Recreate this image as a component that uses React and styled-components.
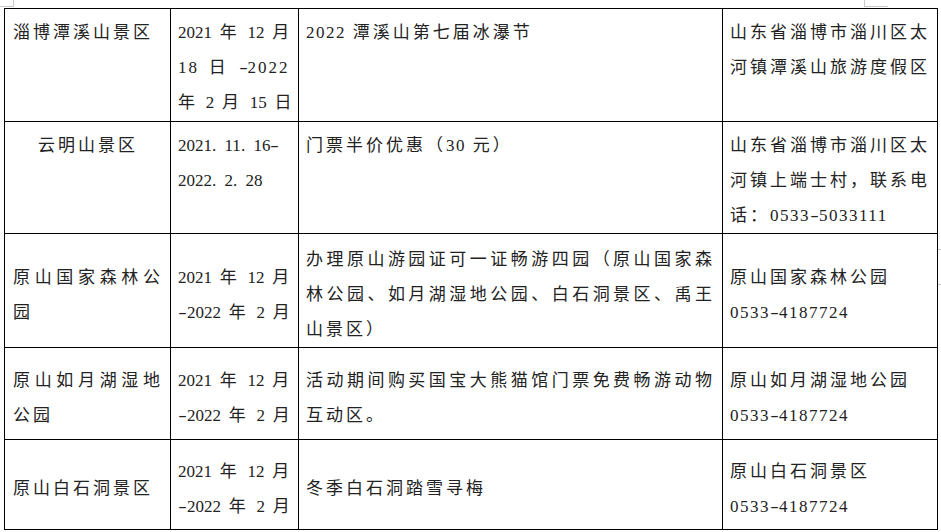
import React from "react";
import styled, { createGlobalStyle } from "styled-components";

const GlobalStyle = createGlobalStyle`
  html, body {
    margin: 0;
    padding: 0;
    background: #fff;
  }
  body {
    width: 941px;
    height: 532px;
    overflow: hidden;
  }
`;

const Page = styled.div`
  position: relative;
  width: 941px;
  height: 532px;
  padding: 8px 0 0 4px;
  box-sizing: border-box;
  font-family: "Liberation Serif", "Noto Sans CJK SC", serif;
  font-size: 17px;
  color: #222;
`;

// Word margin corner marks
const Mark = styled.div`
  position: absolute;
  background: #c9c9c9;
  left: ${p => p.$x}px;
  top: ${p => p.$y}px;
  width: ${p => p.$w}px;
  height: ${p => p.$h}px;
`;

const Table = styled.table`
  width: 933px;
  border-collapse: collapse;
  table-layout: fixed;
`;

const Col = styled.col`
  width: ${p => p.$w}px;
`;

const Row = styled.tr`
  height: ${p => p.$h}px;
`;

const Cell = styled.td`
  border: 1px solid #000;
  padding: ${p => (p.$valign === "middle" ? "8px" : "6px")} 7px 0 7px;
  vertical-align: ${p => p.$valign || "top"};
  text-align: ${p => p.$align || "left"};
  letter-spacing: ${p => (p.$narrow ? "0" : "1.5px")};
  word-spacing: ${p => (p.$narrow ? "3.5px" : "1px")};

  &:first-child {
    padding-left: 8px;
  }
`;

const Line = styled.div`
  line-height: 35px;
  height: 35px;
  white-space: nowrap;
  text-align: ${p => (p.$fill ? "justify" : "inherit")};
  text-align-last: ${p => (p.$fill ? "justify" : "auto")};
  ${p => (p.$track != null ? `letter-spacing: ${p.$track}px;` : "")}
`;

const Han = styled.span`
  letter-spacing: 3px;
`;

const Dot = styled.span`
  display: inline-block;
  width: 12.5px;
  letter-spacing: 0;
`;

const Dash = styled.span`
  display: inline-block;
  width: 9px;
  text-align: center;
  letter-spacing: 0;
  transform: scaleX(1.5);
`;

const HAN = /[\u3000-\u303f\u4e00-\u9fff\uff00-\uffef]/;

function fmt(text) {
  const parts = text.split(/([\u3000-\u303f\u4e00-\u9fff\uff00-\uffef]+|\.|-)/);
  return parts.map((part, i) => {
    if (!part) return null;
    if (part === ".") return <Dot key={i}>.</Dot>;
    if (part === "-") return <Dash key={i}>-</Dash>;
    if (HAN.test(part)) return <Han key={i}>{part}</Han>;
    return <React.Fragment key={i}>{part}</React.Fragment>;
  });
}

const DATES = ["2021 年 12 月", "-2022 年 2 月"];

const rows = [
  {
    h: 113,
    valign: "top",
    cells: [
      { lines: ["淄博潭溪山景区"] },
      { lines: ["2021 年 12 月", { t: "18 日 -2022", track: 2 }, "年 2 月 15 日"] },
      { lines: ["2022 潭溪山第七届冰瀑节"] },
      {
        lines: [
          { t: "山东省淄博市淄川区太", fill: true },
          { t: "河镇潭溪山旅游度假区", fill: true },
        ],
      },
    ],
  },
  {
    h: 112,
    valign: "top",
    cells: [
      { lines: ["云明山景区"], align: "center" },
      { lines: ["2021.11.16-", "2022.2.28"] },
      { lines: ["门票半价优惠（30 元）"] },
      {
        lines: [
          { t: "山东省淄博市淄川区太", fill: true },
          { t: "河镇上端士村，联系电", fill: true },
          "话：0533-5033111",
        ],
      },
    ],
  },
  {
    h: 113,
    valign: "middle",
    cells: [
      { lines: [{ t: "原山国家森林公", fill: true }, "园"] },
      { lines: DATES },
      {
        lines: [
          { t: "办理原山游园证可一证畅游四园（原山国家森", fill: true },
          { t: "林公园、如月湖湿地公园、白石洞景区、禹王", fill: true },
          "山景区）",
        ],
      },
      { lines: ["原山国家森林公园", "0533-4187724"] },
    ],
  },
  {
    h: 92,
    valign: "middle",
    cells: [
      { lines: [{ t: "原山如月湖湿地", fill: true }, "公园"] },
      { lines: DATES },
      { lines: [{ t: "活动期间购买国宝大熊猫馆门票免费畅游动物", fill: true }, "互动区。"] },
      { lines: ["原山如月湖湿地公园", "0533-4187724"] },
    ],
  },
  {
    h: 90,
    valign: "middle",
    cells: [
      { lines: ["原山白石洞景区"] },
      { lines: DATES },
      { lines: ["冬季白石洞踏雪寻梅"] },
      { lines: ["原山白石洞景区", "0533-4187724"] },
    ],
  },
];

export default function App() {
  return (
    <Page>
      <GlobalStyle />
      <Mark $x={13} $y={0} $w={1} $h={7} />
      <Mark $x={0} $y={6} $w={14} $h={1} />
      <Mark $x={864} $y={0} $w={1} $h={7} />
      <Mark $x={864} $y={6} $w={24} $h={1} />
      <Mark $x={938} $y={249} $w={3} $h={1} />
      <Mark $x={938} $y={284} $w={3} $h={1} />

      <Table>
        <colgroup>
          <Col $w={166} />
          <Col $w={128} />
          <Col $w={424} />
          <Col $w={215} />
        </colgroup>
        <tbody>
          {rows.map((row, r) => (
            <Row key={r} $h={row.h}>
              {row.cells.map((cell, c) => (
                <Cell key={c} $valign={row.valign} $align={cell.align} $narrow={c === 1}>
                  {cell.lines.map((ln, i) => {
                    const item = typeof ln === "string" ? { t: ln } : ln;
                    return (
                      <Line key={i} $fill={item.fill} $track={item.track}>
                        {fmt(item.t)}
                      </Line>
                    );
                  })}
                </Cell>
              ))}
            </Row>
          ))}
        </tbody>
      </Table>
    </Page>
  );
}
